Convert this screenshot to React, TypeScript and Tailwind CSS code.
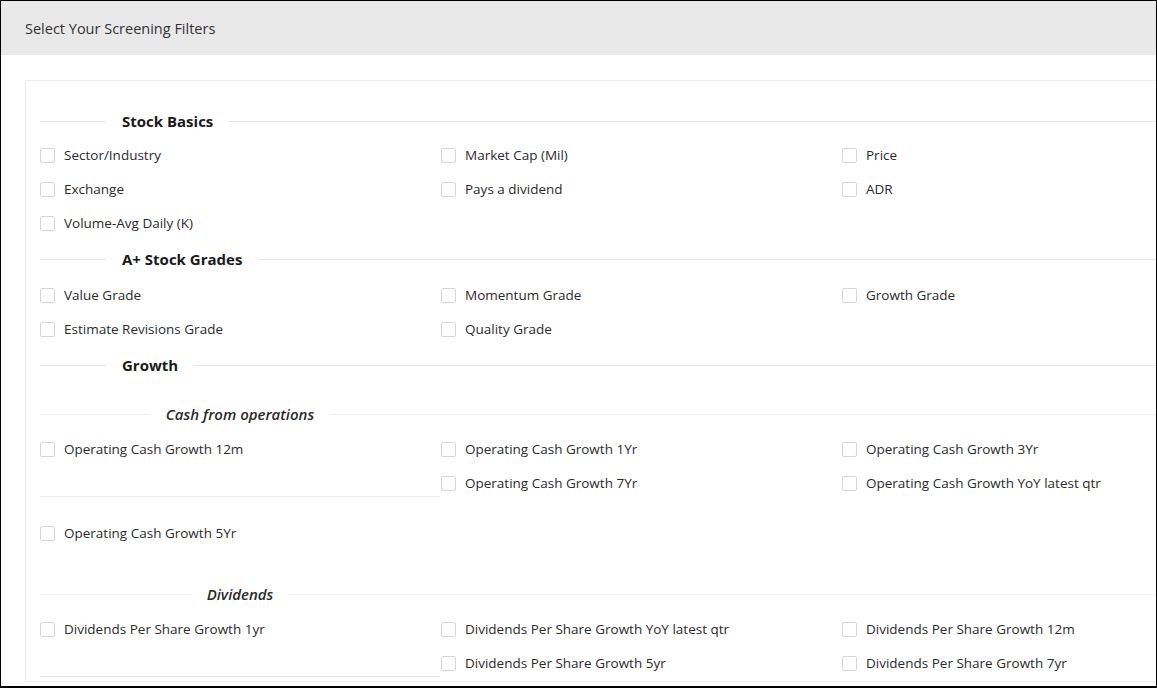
const stockBasics = [
  ["Sector/Industry", "Market Cap (Mil)", "Price"],
  ["Exchange", "Pays a dividend", "ADR"],
  ["Volume-Avg Daily (K)"],
];

const grades = [
  ["Value Grade", "Momentum Grade", "Growth Grade"],
  ["Estimate Revisions Grade", "Quality Grade"],
];

const Check = ({ label }: { label: string }) => (
  <label className="flex items-center gap-[9px] h-[34px] cursor-pointer">
    <span className="w-[15px] h-[15px] shrink-0 rounded-[2px] border border-[#d6d6d6] bg-white" />
    <span className="text-[13.5px] text-[#2b2b2b]">{label}</span>
  </label>
);

const Heading = ({ title, className = "" }: { title: string; className?: string }) => (
  <div className={`flex items-center ${className}`}>
    <div className="w-[66px] h-px bg-[#e4e4e4]" />
    <span className="mx-[16px] text-[15px] font-bold text-[#1a1a1a]">{title}</span>
    <div className="flex-1 h-px bg-[#e4e4e4]" />
  </div>
);

const SubHeading = ({ title, className = "" }: { title: string; className?: string }) => (
  <div className={`flex items-center ${className}`}>
    <div className="w-[400px] flex items-center">
      <div className="flex-1 h-px bg-[#f0f0f0]" />
      <span className="px-[16px] text-[15px] italic font-semibold text-[#2a2a2a]">{title}</span>
      <div className="flex-1 h-px bg-[#f0f0f0]" />
    </div>
    <div className="flex-1 h-px bg-[#f0f0f0]" />
  </div>
);

const Rows = ({ rows }: { rows: string[][] }) => (
  <div>
    {rows.map((row, i) => (
      <div key={i} className="grid grid-cols-[401px_401px_401px]">
        {row.map((l) => (
          <Check key={l} label={l} />
        ))}
      </div>
    ))}
  </div>
);

const SplitBlock = ({ first, second, third }: { first: string; second: string[]; third: string[] }) => (
  <div className="grid grid-cols-[401px_401px_401px] items-start">
    <div className="w-[400px] h-[65px] border-b border-[#ececec]">
      <Check label={first} />
    </div>
    <div>
      {second.map((l) => (
        <Check key={l} label={l} />
      ))}
    </div>
    <div>
      {third.map((l) => (
        <Check key={l} label={l} />
      ))}
    </div>
  </div>
);

export default function App() {
  return (
    <div
      className="w-[1157px] h-[688px] border-t border-l border-r border-b-2 border-black overflow-hidden bg-white"
      style={{ fontFamily: '"Open Sans", "Noto Sans", sans-serif' }}
    >
      <div className="h-[54px] bg-[#e9e9e9] flex items-center pl-[24px] pt-[2px]">
        <span className="text-[14.5px] text-[#333]">Select Your Screening Filters</span>
      </div>
      <div className="pl-[24px] pt-[25px]">
        <div className="w-[1200px] h-[602px] border border-[#ececec] pl-[14px] pt-[23px]">
          <Heading title="Stock Basics" className="h-[34px]" />
          <Rows rows={stockBasics} />
          <Heading title="A+ Stock Grades" className="h-[38px]" />
          <Rows rows={grades} />
          <Heading title="Growth" className="h-[38px]" />
          <SubHeading title="Cash from operations" className="h-[30px] mt-[15px] mb-[3px]" />
          <SplitBlock
            first="Operating Cash Growth 12m"
            second={["Operating Cash Growth 1Yr", "Operating Cash Growth 7Yr"]}
            third={["Operating Cash Growth 3Yr", "Operating Cash Growth YoY latest qtr"]}
          />
          <div className="mt-[16px]">
            <Check label="Operating Cash Growth 5Yr" />
          </div>
          <SubHeading title="Dividends" className="h-[30px] mt-[29px] mb-[3px]" />
          <SplitBlock
            first="Dividends Per Share Growth 1yr"
            second={["Dividends Per Share Growth YoY latest qtr", "Dividends Per Share Growth 5yr"]}
            third={["Dividends Per Share Growth 12m", "Dividends Per Share Growth 7yr"]}
          />
        </div>
      </div>
    </div>
  );
}
